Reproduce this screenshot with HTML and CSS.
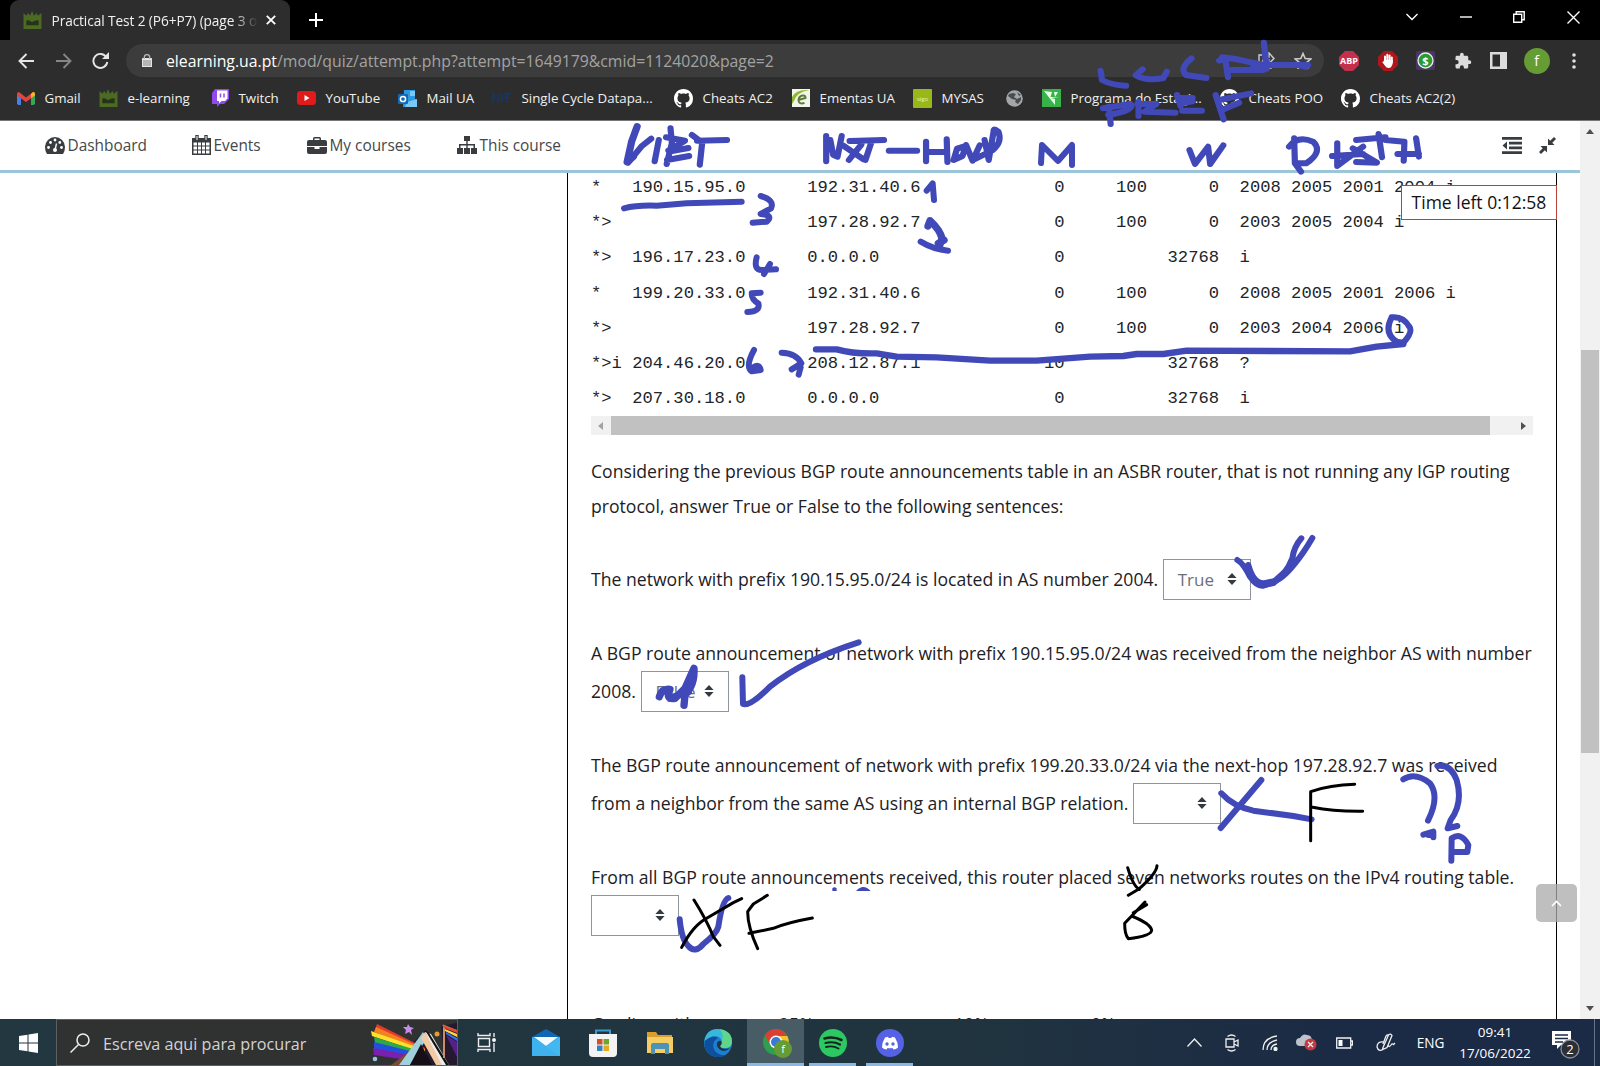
FILE: index.html
```html
<!DOCTYPE html>
<html lang="en">
<head>
<meta charset="utf-8">
<title>Practical Test 2 (P6+P7) (page 3 of 4)</title>
<link rel="stylesheet" href="styles.css">
</head>
<body>
<svg class="defs" width="0" height="0">
  <symbol id="crown" viewBox="0 0 19 19"><path fill="#4c6b22" d="M0 2l3 3 2-3 2 3 2-5 2 5 3-3 1 3 4-3v17H0z"/><path fill="#26331a" d="M3 10q3-1 6 2 4-3 7-2v5H3z"/></symbol>
  <symbol id="github" viewBox="0 0 16 16"><path fill="#fff" d="M8 0C3.58 0 0 3.58 0 8c0 3.54 2.29 6.53 5.47 7.59.4.07.55-.17.55-.38 0-.19-.01-.82-.01-1.49-2.01.37-2.53-.49-2.69-.94-.09-.23-.48-.94-.82-1.13-.28-.15-.68-.52-.01-.53.63-.01 1.08.58 1.23.82.72 1.21 1.87.87 2.33.66.07-.52.28-.87.51-1.07-1.78-.2-3.64-.89-3.64-3.95 0-.87.31-1.59.82-2.15-.08-.2-.36-1.02.08-2.12 0 0 .67-.21 2.2.82.64-.18 1.32-.27 2-.27s1.36.09 2 .27c1.53-1.04 2.2-.82 2.2-.82.44 1.1.16 1.92.08 2.12.51.56.82 1.27.82 2.15 0 3.07-1.87 3.75-3.65 3.95.29.25.54.73.54 1.48 0 1.07-.01 1.93-.01 2.2 0 .21.15.46.55.38A8.01 8.01 0 0 0 16 8c0-4.42-3.58-8-8-8z"/></symbol>
  <symbol id="sort" viewBox="0 0 10 12"><path fill="#343a40" d="M5 0l4.600 5H.4zM5 12L.4 7h9.200z"/></symbol>
</svg>

<header class="tabs">
  <div class="tab">
    <svg width="19" height="18"><use href="#crown"/></svg>
    <span class="tab-title">Practical Test 2 (P6+P7) (page 3 of</span>
    <svg width="10" height="10" viewBox="0 0 10 10" stroke="#fff" stroke-width="1.800"><path d="M.8.8l8.400 8.400M9.200.8L.8 9.200"/></svg>
  </div>
  <svg class="plus" width="14" height="14" viewBox="0 0 14 14" stroke="#fff" stroke-width="2"><path d="M7 0v14M0 7h14"/></svg>
  <div class="win">
    <svg width="12" height="8" viewBox="0 0 12 8"><path d="M.5 1L6 6.500 11.500 1"/></svg>
    <svg width="12" height="8" viewBox="0 0 12 8"><path d="M0 4h12"/></svg>
    <svg width="12" height="12" viewBox="0 0 12 12"><path d="M.7 3.200h8v8h-8zM3.200 3V.7h8v8H9"/></svg>
    <svg width="13" height="13" viewBox="0 0 13 13"><path d="M.5.5l12 12M12.500.5l-12 12"/></svg>
  </div>
</header>

<div class="toolbar">
  <svg class="back" width="16" height="16" viewBox="0 0 16 16"><path d="M16 8H2M8.500 1L1.500 8l7 7"/></svg>
  <svg class="fwd" width="16" height="16" viewBox="0 0 16 16"><path d="M0 8h14M7.500 1l7 7-7 7"/></svg>
  <svg class="reload" width="17" height="17" viewBox="0 0 17 17"><path d="M14.500 5.500A7 7 0 1 0 15.300 10"/><path fill="#e6e6e6" stroke="none" d="M17 0v7h-7z"/></svg>
  <div class="omnibox">
    <svg width="10" height="13" viewBox="0 0 10 13"><rect y="5" width="10" height="8" rx="1" fill="#b5b5b5"/><path d="M2.300 5V3.300a2.700 2.700 0 0 1 5.400 0V5" fill="none" stroke="#b5b5b5" stroke-width="1.400"/></svg>
    <span class="url"><b>elearning.ua.pt</b>/mod/quiz/attempt.php?attempt=1649179&amp;cmid=1124020&amp;page=2</span>
    <svg class="share" width="18" height="18" viewBox="0 0 18 18"><path d="M5 3H2v13h12v-4M5 11q1-6 7-6V1l5 5.500-5 5V8q-4 0-7 3z"/></svg>
    <svg class="star" width="18" height="17" viewBox="0 0 18 17"><path d="M9 1.500l2.200 5 5.500.5-4.200 3.600 1.300 5.400L9 13.100 4.200 16l1.300-5.400L1.300 7l5.500-.5z"/></svg>
  </div>
  <div class="ext">
    <svg width="20" height="20" viewBox="0 0 20 20"><path fill="#c4304b" d="M6 0h8l6 6v8l-6 6H6l-6-6V6z"/><text x="10" y="13.300" class="abp">ABP</text></svg>
    <svg width="20" height="20" viewBox="0 0 20 20"><path fill="#b1161b" d="M6 0h8l6 6v8l-6 6H6l-6-6V6z"/><path stroke="#fff" stroke-width="2" stroke-linecap="round" d="M7 11V5.500M9.300 10V3.700M11.600 10V4.500M13.800 11V6.500"/><path fill="#fff" d="M6 9h8.800v3q-1 5-4 5-2.500 0-4-2.500L4.200 11l1.300-.5z"/></svg>
    <svg width="19" height="19" viewBox="0 0 19 19"><rect width="19" height="19" rx="2" fill="#4b3566"/><circle cx="9.500" cy="9.500" r="7.500" fill="#2b9a32" stroke="#e8efe8" stroke-width="1.300"/><text x="9.500" y="13.500" class="usd">$</text></svg>
    <svg width="18" height="18" viewBox="0 0 24 24"><path fill="#dcdcdc" d="M20.500 11H19V7c0-1.100-.9-2-2-2h-4V3.500a2.500 2.500 0 0 0-5 0V5H4c-1.100 0-2 .9-2 2v3.800h1.500a2.700 2.700 0 0 1 0 5.400H2V20c0 1.100.9 2 2 2h3.800v-1.500a2.700 2.700 0 0 1 5.400 0V22H17c1.100 0 2-.9 2-2v-4h1.500a2.500 2.500 0 0 0 0-5z"/></svg>
    <svg width="17" height="17" viewBox="0 0 17 17"><path fill="#dcdcdc" fill-rule="evenodd" d="M0 0h17v17H0zM2.500 2.500v12H10v-12z"/></svg>
    <span class="avatar">f</span>
    <svg width="4" height="16" viewBox="0 0 4 16" fill="#e0e0e0"><circle cx="2" cy="2" r="1.800"/><circle cx="2" cy="8" r="1.800"/><circle cx="2" cy="14" r="1.800"/></svg>
  </div>
</div>

<nav class="bookmarks">
  <a class="w82"><svg width="18" height="13" viewBox="0 0 18 13"><path fill="#4a7fe0" d="M0 2h4v11H1.500L0 12z"/><path fill="#3aa757" d="M14 2h4v10l-1.500 1H14z"/><path fill="#e0443a" d="M0 2q0-2 2-2l7 5.500L16 0q2 0 2 2v1.500L9 10 0 3.500z"/><path fill="#f5b921" d="M14 2l2-2q2 0 2 2v1.500L14 6z"/></svg>Gmail</a>
  <a class="w113"><svg width="19" height="18"><use href="#crown"/></svg>e-learning</a>
  <a class="w85"><svg width="17" height="18" viewBox="0 0 17 18"><path fill="#9249e8" d="M3 0h14v10l-5 5H8l-3 3v-3H0V4z"/><path fill="#fff" d="M5 1.500h10.500v8L13 12H9.500L7 14.500V12H5z"/><path stroke="#9249e8" stroke-width="1.500" d="M8.500 4.500v4M12 4.500v4"/></svg>Twitch</a>
  <a class="w101"><svg width="19" height="14" viewBox="0 0 19 14"><rect width="19" height="14" rx="3.500" fill="#e01b1b"/><path fill="#fff" d="M7.500 4v6l5-3z"/></svg>YouTube</a>
  <a class="w94"><svg width="19" height="17" viewBox="0 0 19 17"><path fill="#2d9ae0" d="M6 0h11v9l2 1v7H5z"/><path fill="#7ac6f4" d="M12 1h5v5h-5zM9 12l10-3v8H7z"/><rect y="4" width="10" height="10" rx="1" fill="#1268b8"/><circle cx="5" cy="9" r="2.600" fill="none" stroke="#fff" stroke-width="1.500"/></svg>Mail UA</a>
  <a class="w182"><svg width="20" height="10" viewBox="0 0 20 10" fill="none" stroke="#1b3458" stroke-width="2"><path d="M1 10V1l6 8V1M10 1v8M12 1h7M15 1v8M10 5h8"/></svg>Single Cycle Datapa...</a>
  <a class="w118"><svg width="19" height="19"><use href="#github"/></svg>Cheats AC2</a>
  <a class="w121"><svg width="18" height="18" viewBox="0 0 18 18"><rect width="18" height="18" fill="#f2f5ea"/><path fill="#8dbb2f" d="M0 8Q4 0 17 1 5 3 2 12l-2 3z"/><path fill="none" stroke="#5f7a3a" stroke-width="2" d="M6.500 11l7-2q0-3-3-2.500-4 1-4 5 .5 4 6 2.500"/></svg>Ementas UA</a>
  <a class="w93"><svg width="19" height="19" viewBox="0 0 19 19"><rect width="19" height="19" rx="1" fill="#98b81a"/><text x="9.500" y="11.500" class="sigo">sigo</text></svg>MYSAS</a>
  <a class="w36"><svg width="17" height="17" viewBox="0 0 17 17"><circle cx="8.500" cy="8.500" r="8.300" fill="#a4a7aa"/><path fill="#4a4c4e" d="M3 4l4-1 3 1-2 3 3 2 4-2v3l-3 4-3-2 1-2-4-1-4-3zM11 2l4 3-2 1z"/></svg></a>
  <a class="w178"><svg width="19" height="18" viewBox="0 0 19 18"><rect width="19" height="18" fill="#38b34a"/><path fill="#eaffea" d="M2 2l8 1-1.500 5H17L9 9l4 1v6zM12 3h4l-3 5z"/></svg>Programa do Estági...</a>
  <a class="w122"><svg width="19" height="19"><use href="#github"/></svg>Cheats POO</a>
  <a><svg width="19" height="19"><use href="#github"/></svg>Cheats AC2(2)</a>
</nav>

<div class="viewport">
  <div class="page">
    <nav class="site">
      <a class="n1"><svg width="20" height="17" viewBox="0 0 20 17"><path fill="#3a3d40" d="M10 0a10 10 0 0 1 10 10q0 4-2 7H2q-2-3-2-7A10 10 0 0 1 10 0z"/><g fill="#fff"><circle cx="3.500" cy="10.500" r="1.400"/><circle cx="5.500" cy="5.500" r="1.400"/><circle cx="10" cy="3" r="1.400"/><circle cx="14.800" cy="5.500" r="1.400"/><circle cx="16.500" cy="10.500" r="1.400"/><circle cx="10" cy="13" r="2"/></g><path stroke="#fff" stroke-width="1.400" d="M10 13l1.500-6.500"/></svg>Dashboard</a>
      <a class="n2"><svg width="19" height="20" viewBox="0 0 19 20"><path fill="#3a3d40" fill-rule="evenodd" d="M0 3h19v17H0zM1.500 7.500v3H5v-3zM6 7.500v3h3v-3zM10 7.500v3h3v-3zM14 7.500v3h3.500v-3zM1.500 11.500v3H5v-3zM6 11.500v3h3v-3zM10 11.500v3h3v-3zM14 11.500v3h3.500v-3zM1.500 15.500v3H5v-3zM6 15.500v3h3v-3zM10 15.500v3h3v-3zM14 15.500v3h3.500v-3z"/><path stroke="#3a3d40" stroke-width="3.400" d="M5 0v5M14 0v5"/><path stroke="#fff" stroke-width="1" d="M5 1v4M14 1v4"/></svg>Events</a>
      <a class="n3"><svg width="20" height="17" viewBox="0 0 20 17"><path fill="#3a3d40" fill-rule="evenodd" d="M6 3V1.500Q6 0 7.500 0h5Q14 0 14 1.500V3h4q2 0 2 2v4H0V5q0-2 2-2zM7.500 3h5V1.500h-5zM0 10h7.500v2h5v-2H20v5q0 2-2 2H2q-2 0-2-2z"/></svg>My courses</a>
      <a class="n4"><svg width="20" height="18" viewBox="0 0 20 18"><path fill="#3a3d40" d="M7 0h6v5h-2.300v3H18v4h2v6h-6v-6h2.500V9.500h-5.800V12H13v6H7v-6h2.300V9.500H3.500V12H6v6H0v-6h2V8h7.300V5H7z"/></svg>This course</a>
      <svg class="outdent" width="20" height="17" viewBox="0 0 20 17"><path fill="#3a3d40" d="M0 0h20v2.800H0zM7 4.700h13v2.800H7zM7 9.500h13v2.800H7zM0 14.200h20V17H0zM5 4.500v8L.5 8.500z"/></svg>
      <svg width="17" height="17" viewBox="0 0 17 17"><path fill="#3a3d40" d="M8 9v6.500L5.800 13.300 2 17 0 15l3.700-3.800L1.500 9zM9 8V1.500l2.200 2.200L15 0l2 2-3.700 3.800L15.500 8z"/></svg>
    </nav>
    <div class="columns">
      <aside></aside>
      <main>
<pre>*   190.15.95.0      192.31.40.6             0     100      0  2008 2005 2001 2004 i
*>                   197.28.92.7             0     100      0  2003 2005 2004 i
*>  196.17.23.0      0.0.0.0                 0          32768  i
*   199.20.33.0      192.31.40.6             0     100      0  2008 2005 2001 2006 i
*>                   197.28.92.7             0     100      0  2003 2004 2006 i
*>i 204.46.20.0      208.12.87.1            10          32768  ?
*>  207.30.18.0      0.0.0.0                 0          32768  i</pre>
        <div class="hscroll"><i class="left"></i><span></span><i class="right"></i></div>
        <p class="intro">Considering the previous BGP route announcements table in an ASBR router, that is not running any IGP routing<br>protocol, answer True or False to the following sentences:</p>
        <div class="row q1">The network with prefix 190.15.95.0/24 is located in AS number 2004.<span class="select">True<svg width="10" height="12"><use href="#sort"/></svg></span></div>
        <div class="row q2">A BGP route announcement of network with prefix 190.15.95.0/24 was received from the neighbor AS with number</div>
        <div class="row">2008.<span class="select">False<svg width="10" height="12"><use href="#sort"/></svg></span></div>
        <div class="row q3">The BGP route announcement of network with prefix 199.20.33.0/24 via the next-hop 197.28.92.7 was received</div>
        <div class="row">from a neighbor from the same AS using an internal BGP relation.<span class="select"><svg width="10" height="12"><use href="#sort"/></svg></span></div>
        <div class="row q4">From all BGP route announcements received, this router placed seven networks routes on the IPv4 routing table.</div>
        <div class="row"><span class="select first"><svg width="10" height="12"><use href="#sort"/></svg></span></div>
        <div class="grading"><span>Grading with</span><span>25%</span><span>10%</span><span>0%</span></div>
      </main>
    </div>
  </div>
  <div class="vscroll"><i class="up"></i><span></span><i class="down"></i></div>
</div>

<footer class="taskbar">
  <div class="start"><svg width="19" height="20" viewBox="0 0 19 20" fill="#fff"><path d="M0 3l8.500-1.300v7.800H0zM9.500 1.500L19 0v9.500H9.500zM0 10.500h8.500v7.800L0 17zM9.500 10.500H19V20l-9.500-1.500z"/></svg></div>
  <div class="search">
    <svg width="20" height="20" viewBox="0 0 20 20" fill="none" stroke="#eee" stroke-width="1.500"><circle cx="13" cy="7" r="6"/><path d="M8.500 11.500L.5 19.500"/></svg>
    <span>Escreva aqui para procurar</span>
    <svg class="pride" width="86" height="45" viewBox="0 0 86 45">
      <path fill="#24192f" d="M22 45L54 10 73 38 70 6l16-3v42z"/>
      <path fill="#e33a2c" d="M6 4l48 24v4L4 10z"/><path fill="#f58220" d="M5 7l49 22v3L3 12z"/><path fill="#ffe12b" d="M0 11l54 19v4L1 16z"/><path fill="#2fa84a" d="M3 17l52 16v4L4 23z"/><path fill="#2350d8" d="M3 22l52 13v4L3 29z"/><path fill="#7a1fb0" d="M2 28l52 10 2 5L3 35z"/>
      <path fill="#7b4a35" d="M20 45L37 32l8 1-12 12z"/><path fill="#9fd0dc" d="M28 45l24-33 4 6-17 27z"/><path fill="#f1c9a2" d="M50 18l4-6 20 33h-9z"/><path fill="#ececec" d="M54 12l6 2 18 31h-7z"/><path fill="#111" d="M54 10l4 3 20 32h-3z"/><path fill="#160f18" d="M50 24l11 21H39z"/>
      <path fill="none" stroke="#c98d6a" stroke-width="2" d="M73 38V6l13 5"/><path fill="#e04a32" d="M71 5l15 5v3L73 8z"/><path fill="#ffd83d" d="M74 9l12 5v3L74 11z"/><path fill="#3670e0" d="M75 12l11 6v3L75 14z"/><path fill="#55208a" d="M75 15l11 7v15z"/>
      <path fill="#c88be8" d="M37 4l2 3 4 1-3 2 1 5-3-3-4 2 1-4-3-3 4 0z"/><circle cx="66" cy="14" r="2.500" fill="#e79a35"/><circle cx="4" cy="39" r="2.300" fill="#8fc5e8"/>
    </svg>
  </div>
  <div class="task tv"><svg width="19" height="19" viewBox="0 0 19 19" fill="none" stroke="#eee" stroke-width="1.400"><path d="M1 0v2.500h12V0M1 19v-2.500h12V19M1.500 5.500h11v8h-11zM17 0v4M17 10v9"/><circle cx="17" cy="7" r="1.300" fill="#fff"/></svg></div>
  <div class="task"><svg width="28" height="27" viewBox="0 0 28 27"><path fill="#1267b4" d="M0 8l14-8 14 8v6H0z"/><path fill="#2ea8ea" d="M0 8h28v19H0z"/><path fill="#f4fafd" d="M2 8h24l-12 9z"/><path fill="#1f8fdb" d="M0 8l28 19H0z" opacity=".5"/><path fill="#54c4f5" d="M0 8l14 9L28 8v19H0z" opacity=".55"/></svg></div>
  <div class="task"><svg width="28" height="28" viewBox="0 0 28 28"><path fill="none" stroke="#3a9ad0" stroke-width="2" d="M7 7V1.500h14V7"/><path fill="#f3f3f3" d="M0 5h28v19q0 4-4 4H4q-4 0-4-4z"/><path fill="#d64f2a" d="M8 10h5.500v5.500H8z"/><path fill="#6fa52c" d="M14.500 10H20v5.500h-5.500z"/><path fill="#2f83c4" d="M8 16.500h5.500V22H8z"/><path fill="#e8a81f" d="M14.500 16.500H20V22h-5.500z"/></svg></div>
  <div class="task"><svg width="26" height="22" viewBox="0 0 26 22"><path fill="#d99f2b" d="M0 0h9l2 3h14v5H0z"/><path fill="#f6cd62" d="M0 5h26v16H0z"/><path fill="#4d93b8" d="M4 22V13q0-2 2-2h14q2 0 2 2v9h-4v-5H8v5z"/></svg></div>
  <div class="task edge"><svg width="28" height="28" viewBox="0 0 28 28"><circle cx="14" cy="14" r="14" fill="#1a7fd0"/><path fill="#0f4f9c" d="M2 9Q10 6 14 9q-8 5-3 13 4 5 11 4-6 4-13 1Q-3 21 2 9z"/><path fill="#3ab8dc" d="M.5 12Q2 0 14 0q13 1 14 12 0 7-7 7-5 0-5-2 3-3 1-7Q12 3 .5 12z"/><path fill="#5fd68a" d="M16 .2Q28 2 28 13q-.5 6-7 6-5 0-5-2 3-2 2-6 2-5-2-10.800z"/><path fill="#20353f" d="M17 12q1.500 3-1 5 2 4.500 10 2-4 4-8.500 2.500Q12 19 13 14q1.500-3 4-2z"/></svg></div>
  <div class="task active"><svg width="30" height="30" viewBox="0 0 30 30"><circle cx="14" cy="14" r="13" fill="#2f9e4d"/><path fill="#db3f34" d="M2.700 7.500A13 13 0 0 1 25.300 8H14L9 17z"/><path fill="#f6c12e" d="M14 8h11.300A13 13 0 0 1 15 27l5-11z"/><circle cx="14" cy="14" r="6.500" fill="#fff"/><circle cx="14" cy="14" r="5" fill="#3b78d8"/><circle cx="21" cy="21" r="9" fill="#659c33"/><text x="21" y="25" class="badge-f">f</text></svg></div>
  <div class="task open"><svg width="28" height="28" viewBox="0 0 28 28"><circle cx="14" cy="14" r="14" fill="#2cc861"/><g fill="none" stroke="#14251b" stroke-linecap="round"><path stroke-width="2.600" d="M5.500 9.500q9-2.500 17 1.500"/><path stroke-width="2.200" d="M6.500 14q8-2 14.500 1.500"/><path stroke-width="1.900" d="M7 18q7-1.700 12.500 1.500"/></g></svg></div>
  <div class="task open"><svg width="28" height="28" viewBox="0 0 28 28"><circle cx="14" cy="14" r="14" fill="#5562e6"/><path fill="#fff" d="M9 8.500l3-.8.6 1.200h2.800l.6-1.200 3 .8q3 5 3 10-2 2-4.500 2l-1-1.600q-2.500.6-5 0l-1 1.600Q8 20.500 6 18.500q0-5 3-10z"/><circle cx="11" cy="15" r="1.700" fill="#5562e6"/><circle cx="17" cy="15" r="1.700" fill="#5562e6"/></svg></div>
  <div class="tray">
    <div class="slot"><svg width="15" height="9" viewBox="0 0 15 9"><path d="M.5 8.500l7-7.500 7 7.500"/></svg></div>
    <div class="slot"><svg width="14" height="18" viewBox="0 0 14 18"><path d="M1 5h8v8H1zM9 8l4-2v6l-4-2M2.500 2.500q4-3 8 0M2.500 15.500q4 3 8 0"/></svg></div>
    <div class="slot"><svg width="16" height="16" viewBox="0 0 16 16"><path d="M1 15Q1 3 15 1M5 15Q5 7 15 5M9 15q0-5 6-6"/><circle cx="13.500" cy="14" r="1.500" fill="#fff"/></svg></div>
    <div class="slot cloud"><svg width="21" height="17" viewBox="0 0 21 17"><path fill="#bcc3cc" stroke="none" d="M4 12a4 4 0 0 1 0-8q3-5 7-3 5 0 5 6v5z"/><circle cx="14.500" cy="10.500" r="6" fill="#c13a40" stroke="none"/><path d="M12 8l5 5M17 8l-5 5"/></svg></div>
    <div class="slot bat"><svg width="17" height="12" viewBox="0 0 17 12"><path d="M.7 1h14v10H.7zM15 4h1.500v4H15"/><path fill="#fff" stroke="none" d="M2.500 3h4v6h-4z"/></svg></div>
    <div class="slot pen"><svg width="20" height="19" viewBox="0 0 20 19"><path d="M7 14.500L12.500 2q2-2 3.500.5L11 14.500l-4.500 2zM12.500 2q-2-.5-2.500 1L7 11M8 9Q1 8 1 14q1.500 5 6 2.500M12 12q1 3 3 0 1-2 2.500-.5l1.500-1.500"/></svg></div>
    <div class="lang">ENG</div>
    <div class="clock"><span>09:41</span><span>17/06/2022</span></div>
    <div class="notif"><svg width="28" height="30" viewBox="0 0 28 30"><path fill="#fff" d="M0 1h19v14H9l-4 4v-4H0z"/><path stroke="#1b2b45" stroke-width="1.400" d="M3 5h13M3 8.500h13M3 12h8"/><circle cx="18" cy="19" r="9" fill="#2b2f36" stroke="#8b9098"/><text x="18" y="24" class="count">2</text></svg></div>
  </div>
</footer>

<div class="timer">Time left 0:12:58</div>
<div class="totop"><svg width="11" height="7" viewBox="0 0 11 7"><path d="M1 6l4.500-4.500L10 6" fill="none" stroke="#fff" stroke-width="1.700"/></svg></div>

<svg class="ink" width="1600" height="1066" viewBox="0 0 1600 1066">
  <g class="blue">
    <g transform="translate(530 60) scale(.3444 .3333)">
      <path stroke-width="21" d="M311 200L295 245 282 306 300 290"/>
      <path d="M285 308L325 258 352 236M374 240L362 304M408 205L412 250 397 312M395 232L450 242 402 272M408 274L460 264M398 300L462 288M470 225L500 248 493 314M485 242L572 240"/>
      <path d="M860 228V304M872 240L880 284 893 290 905 228M908 256L968 298M962 254L926 300M928 243L1028 240M992 244L974 300M1042 272H1124M1150 245V304M1150 276H1210M1210 238L1212 306M1264 258L1240 266 1230 300 1256 288 1266 255 1285 302 1306 256M1320 240L1332 300 1346 215Q1345 202 1360 215 1372 245 1344 270M1290 298L1325 280"/>
    </g>
    <path stroke-width="6" d="M1041 163L1042 145 1058 161 1072 145 1072 165"/>
    <g transform="translate(1060 0) scale(.3444 .3333)">
      <path d="M118 212L122 240Q150 256 192 257M240 208L220 226Q250 245 300 234L310 215M382 175Q345 205 366 225L425 234M462 182L480 178 488 232M470 172L515 178 590 195M490 210H590L600 185M592 128L600 206M560 202L610 195 720 195"/>
      <path stroke-width="20" d="M582 206L600 198M700 196L714 200"/>
      <path d="M125 325L205 312Q220 330 140 345M142 320L147 372M228 305L228 348M225 312L280 312 245 335 335 338M340 285L350 318M345 294H385M355 310L385 304M355 332H412M452 285L475 358M462 300L555 280M470 330L520 308"/>
      <path d="M376 450L392 492 430 440 436 492 474 436M680 415L682 490 700 515M665 440Q690 405 735 425 765 455 715 490L690 490M790 468L880 462M805 430V498L880 440M850 445L920 488 860 486M860 420L945 412M925 402L935 472M945 420L1000 425 998 482M980 462H1042M1034 415L1042 470"/>
    </g>
    <g transform="translate(570 170) scale(.33333)">
      <path d="M162 115Q200 105 260 107L350 100 515 95M572 78Q615 90 603 115L572 132Q612 135 590 155L548 158M1070 62L1088 40 1092 90M560 262Q550 300 575 300L618 298M600 282L582 312M572 368L545 370Q545 390 565 400 572 425 532 426M552 540Q525 590 545 604L572 600Q568 580 550 592M635 548Q680 550 694 580L665 598M692 592L686 614"/>
      <path stroke-width="22" d="M1074 168L1080 152Q1110 180 1116 205L1108 230M1122 210L1105 220"/>
      <path d="M1052 215Q1090 238 1134 242M2465 442Q2440 490 2480 515L2500 518Q2530 485 2518 470 2500 438 2465 442"/>
      <path stroke-width="19" d="M738 538H800Q850 552 920 550L980 560 1100 562 1260 572H1400L1560 560 1660 558 1700 552 1780 552 1850 542 2340 544 2420 530 2500 522"/>
    </g>
    <g transform="translate(570 440) scale(.33333)">
      <path stroke-width="22" d="M268 770Q275 745 300 748 285 780 315 775L345 745 372 685Q375 735 345 765L342 796M300 775L355 755"/>
      <path stroke-width="18" d="M517 712L519 792Q540 800 600 740 700 660 866 607"/>
    </g>
    <g transform="translate(1080 440) scale(.33333)">
      <path d="M472 360Q490 370 510 410 530 440 550 437M505 375Q520 430 550 430L580 424Q605 420 645 370 670 340 697 294M664 295Q642 320 637 355 615 410 578 428L550 437"/>
      <path stroke-width="20" d="M508 395Q525 435 550 434L580 428 628 385"/>
    </g>
    <g transform="translate(560 740) scale(.33333)">
      <path d="M359 538Q365 600 385 618 405 642 430 612 470 580 475 560 487 480 505 474"/>
      <path class="dot" d="M817 453v-8q6-6 13 0v8zM888 453q22-24 44 0z"/>
    </g>
    <g transform="translate(1080 740) scale(.33333)">
      <path d="M424 160Q460 200 520 212L640 228 695 238M544 120L422 264M970 118Q1005 95 1050 130 1080 170 1044 242M1030 284L1060 275V292M1045 285H1058M1072 78Q1110 70 1130 120 1150 190 1112 240L1103 265 1132 258M1114 362L1115 295Q1145 275 1165 315L1162 336H1120"/>
    </g>
  </g>
  <g class="black">
    <g transform="translate(560 740) scale(.33333)">
      <path d="M365 622Q400 555 440 535L520 488 545 476M402 480Q440 540 460 590L480 616M622 466L580 492 563 515Q563 560 593 626M567 580L640 565Q680 548 757 534"/>
    </g>
    <g transform="translate(1080 740) scale(.33333)">
      <path d="M692 302V155Q750 135 824 133M698 202Q760 215 848 214M143 383Q160 440 178 448M231 377Q230 400 178 446L145 466M195 486L155 528 134 550Q134 585 145 596 215 588 215 570 210 550 155 528M200 494L160 518"/>
    </g>
  </g>
</svg>
</body>
</html>
```
FILE: styles.css
```css
* { box-sizing: border-box; }
body {
  margin: 0;
  width: 1600px;
  height: 1066px;
  overflow: hidden;
  position: relative;
  display: flex;
  flex-direction: column;
  font-family: "Open Sans", "Noto Sans", sans-serif;
  background: #fff;
}
svg { flex: none; display: block; }
.defs { position: absolute; }

/* browser chrome */
.tabs {
  height: 40px;
  flex: none;
  background: #000;
  display: flex;
  align-items: center;
  padding-left: 10px;
}
.tab {
  width: 280px;
  height: 40px;
  background: #2d2d2d;
  border-radius: 9px 9px 0 0;
  display: flex;
  align-items: center;
  padding-left: 13px;
}
.tab-title {
  width: 206px;
  margin: 0 8.500px 0 9.500px;
  overflow: hidden;
  white-space: nowrap;
  font-size: 13.700px;
  letter-spacing: -.1px;
  color: #f1f1f1;
  -webkit-mask-image: linear-gradient(90deg, #000 88%, transparent);
  mask-image: linear-gradient(90deg, #000 88%, transparent);
}
.plus { margin-left: 19px; }
.win {
  margin-left: auto;
  display: flex;
  align-items: center;
  gap: 41.500px;
  padding-right: 20.500px;
  padding-bottom: 6px;
  fill: none;
  stroke: #fff;
  stroke-width: 1.400;
}
.toolbar {
  height: 40px;
  flex: none;
  background: #2d2d2d;
  display: flex;
  align-items: center;
  padding: 1px 0 0 17.500px;
  fill: none;
  stroke: #e6e6e6;
  stroke-width: 1.900;
}
.fwd { margin-left: 22px; stroke: #868686; }
.reload { margin-left: 20.500px; }
.omnibox {
  width: 1198px;
  height: 33px;
  margin-left: 17px;
  background: #3c3c3c;
  border-radius: 17px;
  display: flex;
  align-items: center;
  padding-left: 16px;
}
.url { margin-left: 14px; font-size: 15.800px; color: #a3a3a3; white-space: nowrap; }
.url b { font-weight: 400; color: #fff; }
.share { margin-left: auto; stroke: #ccc; stroke-width: 1.400; }
.star { margin: 0 12px 0 19px; stroke: #ccc; stroke-width: 1.600; }
.ext { display: flex; align-items: center; margin-left: 15px; gap: 18.500px; stroke: none; }
.abp { font: 700 9px "Open Sans", sans-serif; fill: #fff; text-anchor: middle; }
.usd { font: 700 11px "Open Sans", sans-serif; fill: #fff; text-anchor: middle; }
.avatar {
  width: 26px;
  height: 26px;
  border-radius: 50%;
  background: #659c33;
  color: #fff;
  font-size: 14px;
  line-height: 25px;
  text-align: center;
  margin-left: -2px;
  margin-right: 4px;
}
.bookmarks {
  height: 41px;
  flex: none;
  background: #2d2d2d;
  border-bottom: 1px solid #777;
  display: flex;
  padding: 0 0 4px 17px;
}
.bookmarks a {
  display: flex;
  flex: none;
  align-items: center;
  gap: 9.500px;
  font-size: 13.300px;
  color: #f0f0f0;
  white-space: nowrap;
}
.w82 { width: 82px; } .w113 { width: 113px; } .w85 { width: 85px; } .w101 { width: 101px; }
.w94 { width: 94px; } .w182 { width: 182px; } .w118 { width: 118px; } .w121 { width: 121px; }
.w93 { width: 93px; } .w36 { width: 36px; } .w178 { width: 178px; } .w122 { width: 121px; }
.sigo { font: 6px "Open Sans", sans-serif; fill: #e8f5b0; text-anchor: middle; }

/* page */
.viewport { flex: 1; min-height: 0; display: flex; }
.page { flex: 1; display: flex; flex-direction: column; min-height: 0; }
.site {
  height: 52px;
  flex: none;
  border-bottom: 3px solid #9bc6da;
  display: flex;
  align-items: center;
  padding: 0 24px 1px 45px;
  color: #45484b;
}
.site a { display: flex; align-items: center; gap: 2.500px; font-size: 15.400px; flex: none; white-space: nowrap; }
.n1 { width: 147px; } .n2 { width: 115px; } .n3 { width: 150px; }
.outdent { margin: 0 17px 0 auto; }
.columns { flex: 1; min-height: 0; display: flex; }
aside { width: 567px; flex: none; }
main {
  width: 990px;
  border: solid #000;
  border-width: 0 1.500px;
  padding-left: 23px;
  overflow: hidden;
  color: #1d2125;
  font-size: 17.610px;
}
pre {
  margin: -3px 0 0;
  font: 17.160px/35.200px "Liberation Mono", monospace;
  color: #212529;
}
.hscroll {
  margin-top: 0;
  width: 942px;
  height: 19px;
  background: #f1f1f1;
  display: flex;
  align-items: center;
  justify-content: space-between;
}
.hscroll span { width: 879px; height: 19px; background: #c1c1c1; margin-right: auto; margin-left: 8px; }
.hscroll i { border: 4.500px solid transparent; }
.hscroll .left { border-right: 5px solid #a3a3a3; border-left: 0; margin-left: 7px; }
.hscroll .right { border-left: 5px solid #505050; border-right: 0; margin-right: 7px; }
.intro { margin: 18.500px 0 0; line-height: 35px; white-space: nowrap; }
.row { display: flex; align-items: center; height: 41px; white-space: nowrap; }
.q1 { margin-top: 35px; }
.q2, .q3, .q4 { height: 35px; margin-top: 36px; }
.select {
  width: 88px;
  height: 41px;
  margin-left: 5px;
  border: 1px solid #8f959e;
  display: flex;
  align-items: center;
  padding: 0 13.500px;
  font-size: 17px;
  color: #6a7178;
}
.select svg { margin-left: auto; }
.first { margin-left: 0; }
.grading { display: flex; margin-top: 73px; line-height: 30px; }
.grading span { width: 175px; }
.grading span:first-child { width: 188px; }
.grading span:nth-child(3) { width: 137px; }
.vscroll {
  width: 20px;
  background: #f1f1f1;
  display: flex;
  flex-direction: column;
  align-items: center;
}
.vscroll span { width: 18px; height: 403px; margin-top: 216px; background: #c1c1c1; }
.vscroll i { border: 4.500px solid transparent; }
.vscroll .up { margin-top: 8px; border-top: 0; border-bottom: 5px solid #505050; }
.vscroll .down { margin-top: auto; margin-bottom: 8px; border-bottom: 0; border-top: 5px solid #505050; }

/* taskbar */
.taskbar {
  height: 47px;
  flex: none;
  display: flex;
  color: #fff;
  background: linear-gradient(90deg, #22373f, #20343f 60%, #1b2a45 85%);
}
.start { width: 56px; display: flex; align-items: center; padding-left: 18.500px; }
.search {
  width: 402px;
  border: 1px solid #5a5f61;
  background: #303131;
  display: flex;
  align-items: center;
  padding-left: 13px;
  font-size: 16.200px;
  color: #d3d3d3;
  white-space: nowrap;
}
.search span { margin: 2px 0 0 13px; }
.pride { margin-left: auto; }
.task { width: 57px; display: flex; align-items: center; justify-content: center; }
.tv { width: 59px; padding-right: 2px; }
.edge { width: 59px; }
.active { background: #485c65; border-bottom: 3px solid #8ab8e0; padding: 3px 0 0 3px; }
.open { width: 47px; margin-left: 5px; margin-right: 5px; border-bottom: 3px solid #8ab8e0; padding-top: 3px; }
.badge-f { font: 11px "Open Sans", sans-serif; fill: #fff; text-anchor: middle; }
.tray { margin-left: auto; width: 425px; display: flex; fill: none; stroke: #f0f0f0; stroke-width: 1.300; }
.slot, .lang { width: 38px; display: flex; align-items: center; justify-content: center; }
.cloud { padding-right: 3px; }
.bat { padding-right: 4px; }
.pen { width: 42px; }
.lang { width: 48px; font-size: 13.600px; padding-right: 1px; }
.clock { width: 81px; display: flex; flex-direction: column; align-items: center; justify-content: center; font-size: 13.500px; line-height: 21px; padding-right: 1px; }
.notif { display: flex; align-items: center; margin-left: 16px; width: 43px; border-right: 1px solid #697386; stroke: none; padding-top: 5px; }
.count { font: 13px "Open Sans", sans-serif; fill: #fff; text-anchor: middle; }

/* overlays */
.timer {
  position: absolute;
  left: 1401px;
  top: 185px;
  width: 156px;
  height: 35px;
  border: 1px solid #b5433a;
  background: #fff;
  font-size: 17.500px;
  line-height: 33px;
  text-align: center;
  color: #111;
  white-space: nowrap;
}
.totop {
  position: absolute;
  left: 1536px;
  top: 884px;
  width: 41px;
  height: 38px;
  border-radius: 5px;
  background: rgba(170, 170, 170, .75);
  display: flex;
  align-items: center;
  justify-content: center;
}
.ink { position: absolute; left: 0; top: 0; fill: none; stroke-linecap: round; stroke-linejoin: round; pointer-events: none; }
.blue { stroke: #4149b8; stroke-width: 18; }
.blue .dot { fill: #4149b8; stroke: none; }
.black { stroke: #000; stroke-width: 9; }
```
